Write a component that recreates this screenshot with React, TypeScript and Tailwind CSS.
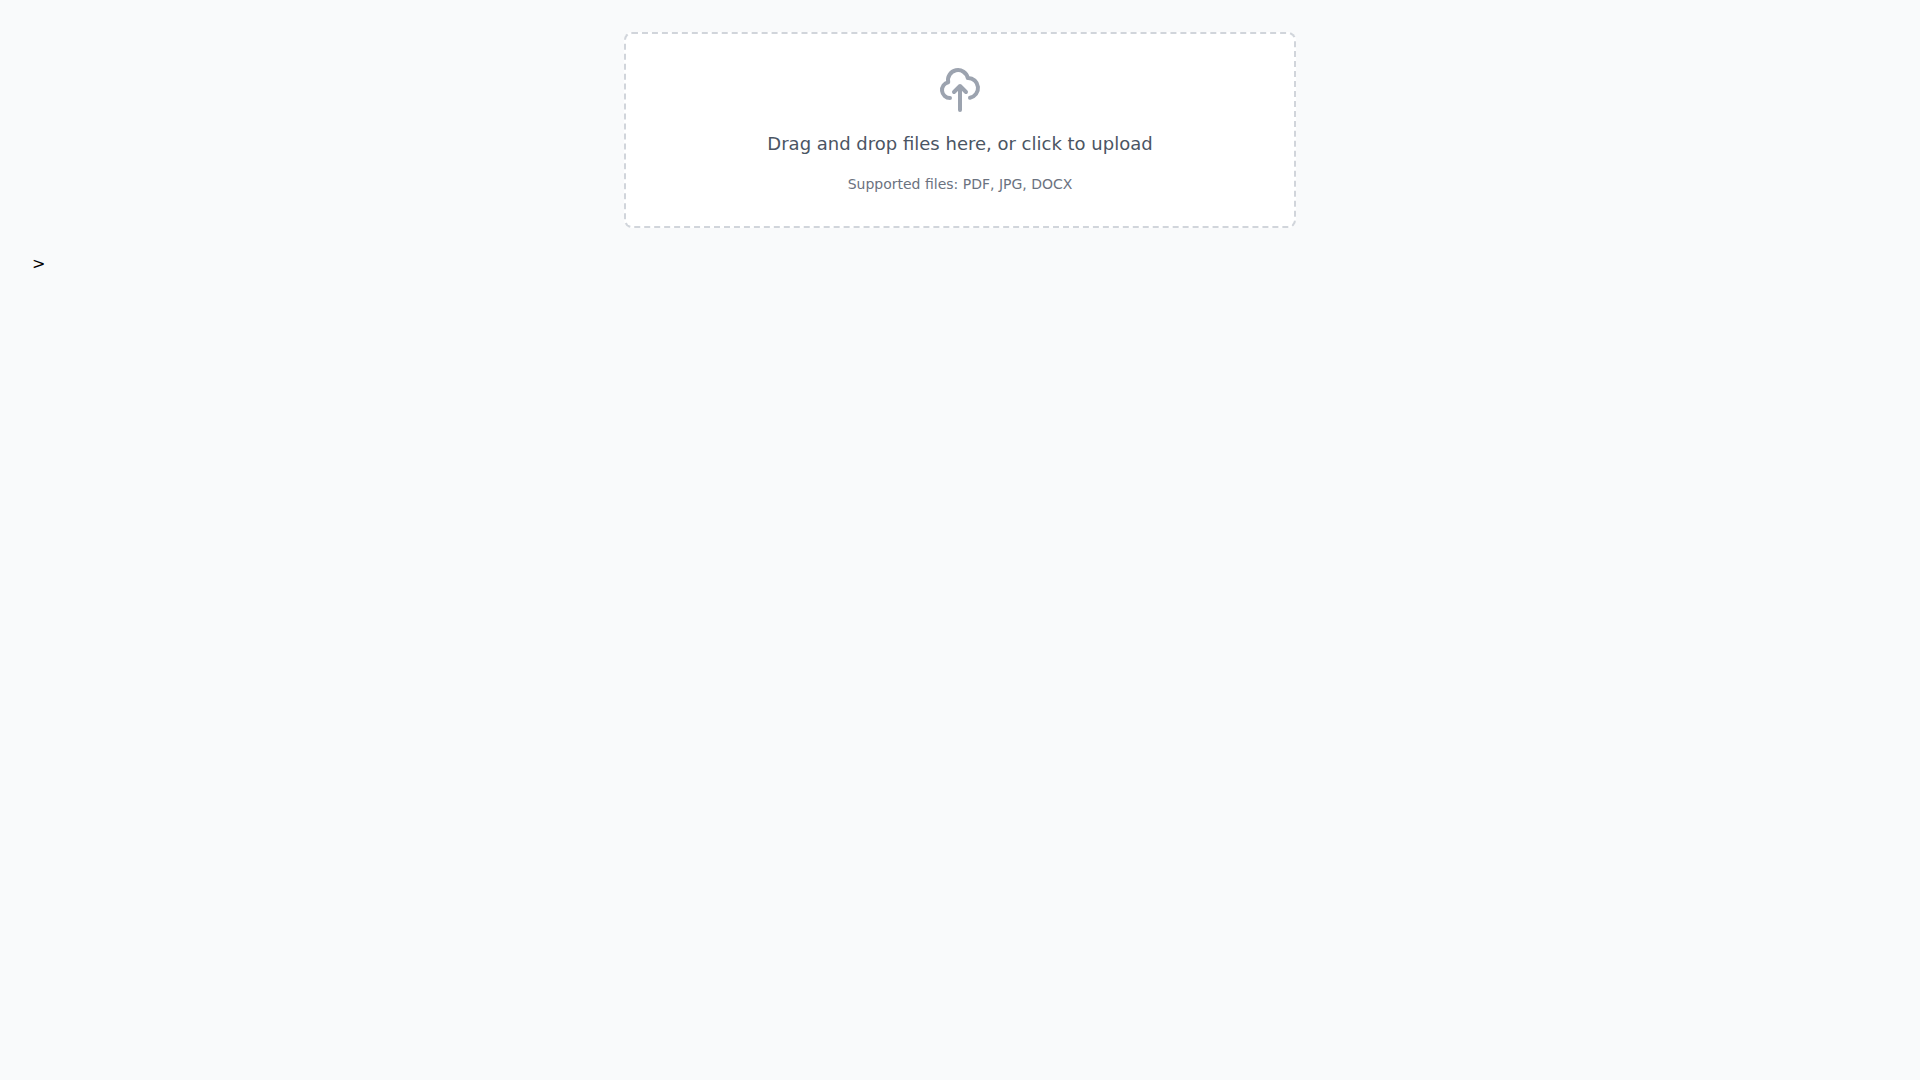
import React, { useRef, useState } from "react";

interface FileUploadProps {
  title: string;
  supported: string[];
}

const FileUpload: React.FC<FileUploadProps> = ({ title, supported }) => {
  const inputRef = useRef<HTMLInputElement>(null);
  const [files, setFiles] = useState<File[]>([]);

  const addFiles = (list: FileList | null) => {
    if (list) {
      setFiles((prev) => [...prev, ...Array.from(list)]);
    }
  };

  return (
    <div className="w-full max-w-2xl mx-auto">
      <button
        type="button"
        onClick={() => inputRef.current?.click()}
        onDragOver={(e) => e.preventDefault()}
        onDrop={(e) => {
          e.preventDefault();
          addFiles(e.dataTransfer.files);
        }}
        className="block w-full rounded-lg border-2 border-dashed border-[#d1d5db] bg-white p-8 text-center cursor-pointer"
      >
        <svg
          className="w-12 h-12 mx-auto mb-4 text-[#9ca3af]"
          fill="none"
          stroke="currentColor"
          viewBox="0 0 24 24"
          aria-hidden="true"
        >
          <path
            strokeLinecap="round"
            strokeLinejoin="round"
            strokeWidth={2}
            d="M7 16a4 4 0 01-.88-7.903A5 5 0 1115.9 6L16 6a5 5 0 011 9.9M15 13l-3-3m0 0l-3 3m3-3v12"
          />
        </svg>
        <span className="block text-lg text-[#4b5563] mb-4">{title}</span>
        <span className="block text-sm text-[#6b7280]">
          Supported files: {supported.join(", ")}
        </span>
      </button>
      <input
        ref={inputRef}
        type="file"
        multiple
        aria-label={title}
        className="hidden"
        onChange={(e) => addFiles(e.target.files)}
      />

      {files.length > 0 && (
        <ul className="mt-4 space-y-2 text-sm text-[#4b5563]">
          {files.map((file, index) => (
            <li key={index}>{file.name}</li>
          ))}
        </ul>
      )}
    </div>
  );
};

export default function App() {
  return (
    <div className="min-h-screen bg-[#f9fafb] p-8 font-['DejaVu_Sans',sans-serif] text-black">
      <FileUpload
        title="Drag and drop files here, or click to upload"
        supported={["PDF", "JPG", "DOCX"]}
      />
      <div className="mt-6">&gt;</div>
    </div>
  );
}
